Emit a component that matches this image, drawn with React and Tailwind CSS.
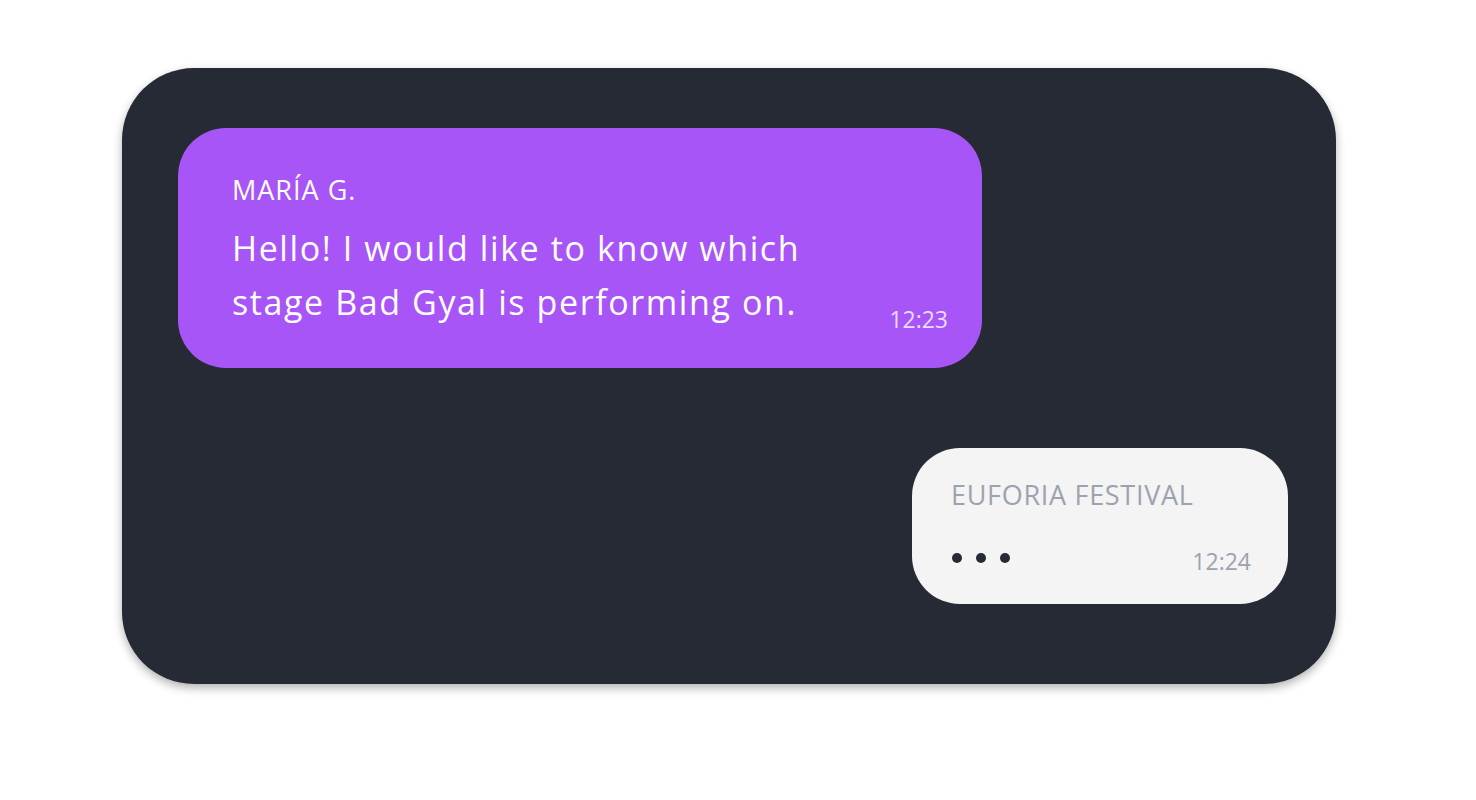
export default function App() {
  return (
    <div className="min-h-[800px] w-full bg-white pt-[68px] pl-[122px]" style={{ fontFamily: '"Open Sans", "Liberation Sans", sans-serif' }}>
      <div className="w-[1214px] h-[616px] rounded-[72px] bg-[#262a35] shadow-[0_4px_10px_rgba(0,0,0,0.3)] pt-[60px] pl-[56px] pr-[48px] flex flex-col">
        <div className="w-[804px] h-[240px] rounded-[48px] bg-[#a855f7] pl-[54px] pr-[34px] flex items-end justify-between pb-[39px]">
          <div className="flex flex-col">
            <div className="text-[27px] leading-[34px] font-medium text-white tracking-[1px]">MARÍA G.</div>
            <div className="mt-[14px] text-[34px] leading-[54px] text-white tracking-[1.6px]">
              <div className="whitespace-nowrap">Hello! I would like to know which</div>
              <div className="whitespace-nowrap">stage Bad Gyal is performing on.</div>
            </div>
          </div>
          <div className="text-[23px] leading-[30px] text-[#eadcff] -mb-[5px]">12:23</div>
        </div>
        <div className="mt-[80px] self-end w-[376px] h-[156px] rounded-[48px] bg-[#f4f4f5] pl-[39px] pr-[37px] pt-[30px] flex flex-col">
          <div className="text-[27px] leading-[34px] font-medium text-[#9ca3af] tracking-[0.7px]">EUFORIA FESTIVAL</div>
          <div className="mt-[28px] flex items-center justify-between">
            <div className="flex items-center gap-[14px] ml-[1px]">
              <span className="block w-[10px] h-[10px] rounded-full bg-[#262a35]" />
              <span className="block w-[10px] h-[10px] rounded-full bg-[#262a35]" />
              <span className="block w-[10px] h-[10px] rounded-full bg-[#262a35]" />
            </div>
            <div className="text-[23px] leading-[30px] text-[#9ca3af] mt-[6px]">12:24</div>
          </div>
        </div>
      </div>
    </div>
  );
}
